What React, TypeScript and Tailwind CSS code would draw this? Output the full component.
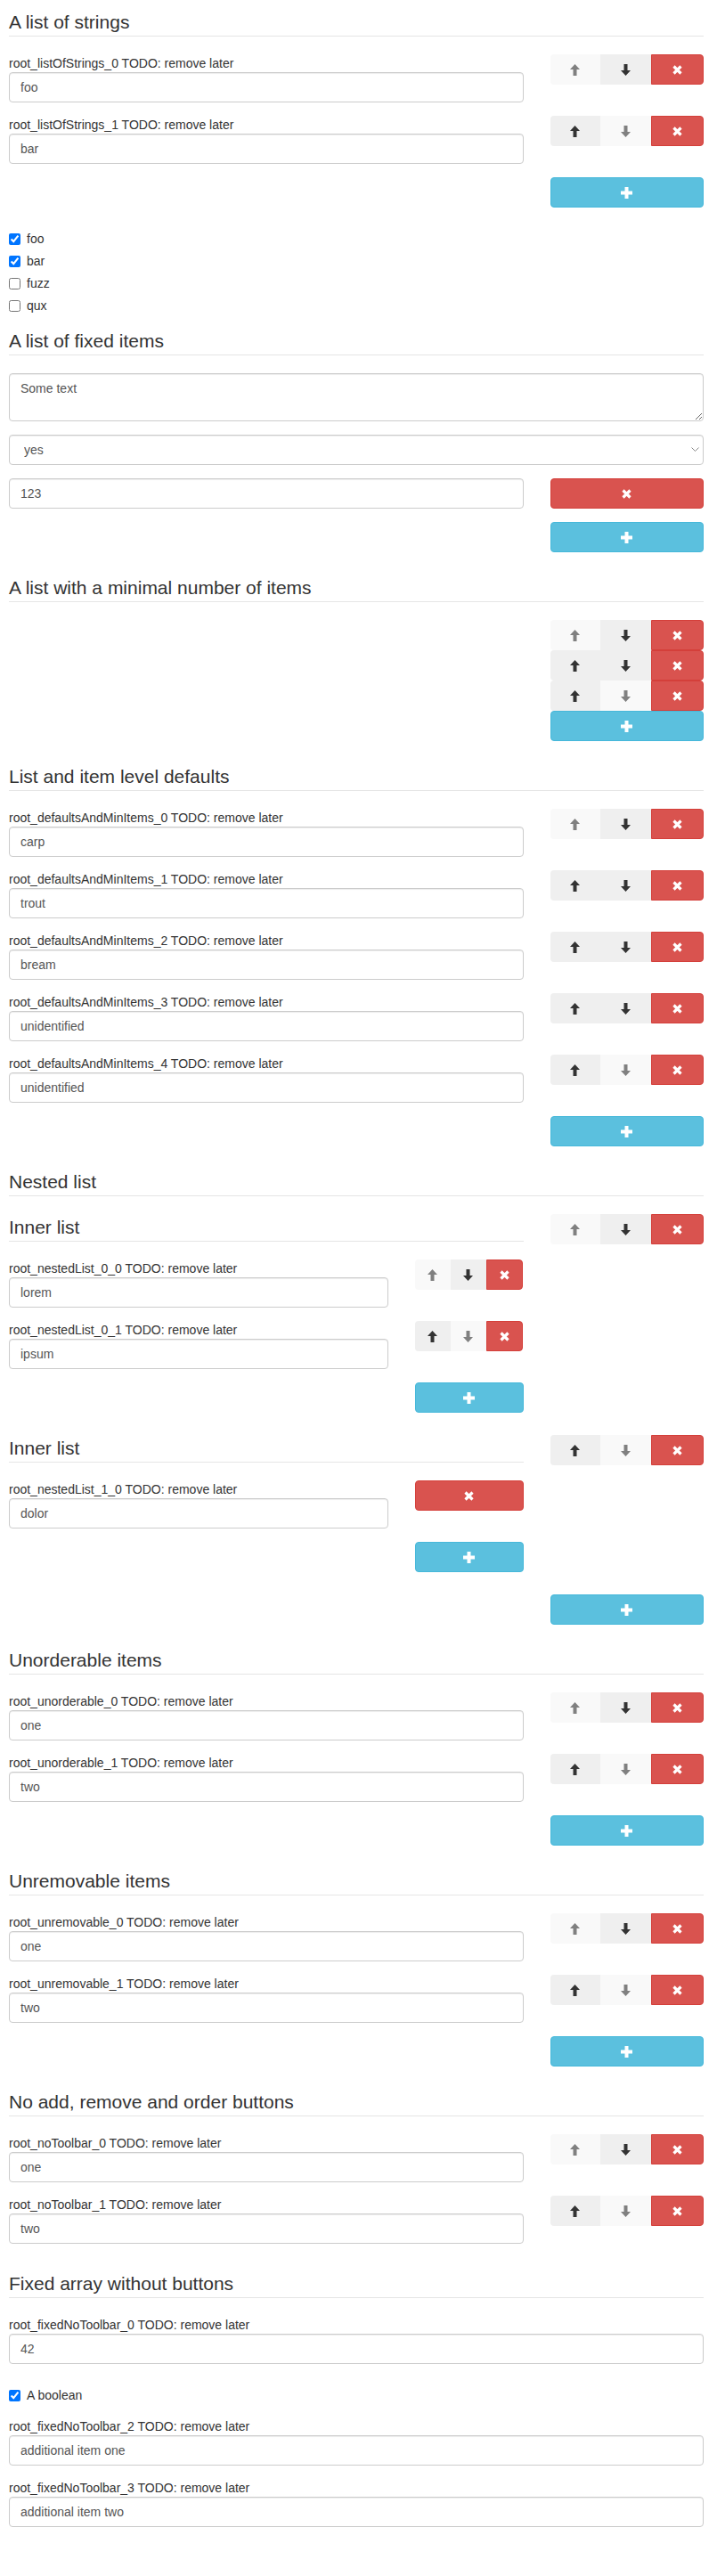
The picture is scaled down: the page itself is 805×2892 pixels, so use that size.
import React from "react";

const ArrowUp = ({ color }: { color: string }) => (
  <svg width="11" height="13" viewBox="0 0 11 13" fill={color}>
    <path d="M5.5 0 L11 6 H7.5 V13 H3.5 V6 H0 Z" />
  </svg>
);
const ArrowDown = ({ color }: { color: string }) => (
  <svg width="11" height="13" viewBox="0 0 11 13" fill={color}>
    <path d="M5.5 13 L11 7 H7.5 V0 H3.5 V7 H0 Z" />
  </svg>
);
const XIcon = () => (
  <svg width="11" height="11" viewBox="0 0 11 11" stroke="#fff" strokeWidth="3.2" fill="none">
    <path d="M1.5 1.5 L9.5 9.5 M9.5 1.5 L1.5 9.5" />
  </svg>
);
const PlusIcon = () => (
  <svg width="13" height="13" viewBox="0 0 13 13" fill="#fff">
    <rect x="4.5" y="0" width="4" height="13" />
    <rect x="0" y="4.5" width="13" height="4" />
  </svg>
);

function Legend({ children }: { children: React.ReactNode }) {
  return (
    <div className="h-[31px] border-b border-[#e5e5e5] text-[21px] leading-[30px] text-[#333] mb-5 whitespace-nowrap">
      {children}
    </div>
  );
}

function TextInput({ value }: { value: string }) {
  return (
    <input
      readOnly
      defaultValue={value}
      className="block w-full h-[34px] px-3 rounded border border-[#ccc] bg-white text-sm text-[#555] shadow-[inset_0_1px_1px_rgba(0,0,0,0.075)] outline-none"
    />
  );
}

function Field({ label, value }: { label: string; value: string }) {
  return (
    <div className="mb-[15px]">
      <label className="block h-5 text-sm leading-5 text-[#333] whitespace-nowrap">{label}</label>
      <TextInput value={value} />
    </div>
  );
}

function Toolbox({ up = true, down = true, order = true }: { up?: boolean; down?: boolean; order?: boolean }) {
  return (
    <div className="flex h-[34px]">
      {order && (
        <>
          <button
            className={`flex-1 h-[34px] flex items-center justify-center rounded-l ${up ? "bg-[#efefef]" : "bg-[#f9f9f9]"}`}
          >
            <ArrowUp color={up ? "#333" : "#808080"} />
          </button>
          <button
            className={`flex-1 h-[34px] flex items-center justify-center ${down ? "bg-[#efefef]" : "bg-[#f9f9f9]"}`}
          >
            <ArrowDown color={down ? "#333" : "#808080"} />
          </button>
        </>
      )}
      <button
        className={`flex-1 h-[34px] flex items-center justify-center bg-[#d9534f] border border-[#d43f3a] rounded-r ${order ? "" : "rounded-l"}`}
      >
        <XIcon />
      </button>
    </div>
  );
}

function AddButton({ narrow = false, className = "" }: { narrow?: boolean; className?: string }) {
  return (
    <div className={`flex justify-end ${className}`}>
      <button
        className={`${narrow ? "w-[121.875px]" : "w-[172.5px]"} h-[34px] flex items-center justify-center rounded bg-[#5bc0de] border border-[#46b8da]`}
      >
        <PlusIcon />
      </button>
    </div>
  );
}

function Row({
  label,
  value,
  up,
  down,
  order = true,
  narrow = false,
}: {
  label: string;
  value: string;
  up?: boolean;
  down?: boolean;
  order?: boolean;
  narrow?: boolean;
}) {
  return (
    <div
      className={`grid ${narrow ? "grid-cols-[minmax(0,1fr)_121.875px]" : "grid-cols-[minmax(0,1fr)_172.5px]"} gap-x-[30px] items-start`}
    >
      <Field label={label} value={value} />
      <Toolbox up={up} down={down} order={order} />
    </div>
  );
}

function Check({ label, checked }: { label: string; checked?: boolean }) {
  return (
    <label className="relative block h-5 pl-5 text-sm leading-5 text-[#333]">
      <input
        type="checkbox"
        defaultChecked={checked}
        className="absolute left-0 top-1 m-0 w-[13px] h-[13px] accent-[#0075ff]"
      />
      {label}
    </label>
  );
}

export default function App() {
  return (
    <div className="w-[805px] min-h-[2892px] bg-white pl-[10px] pr-[15px] pt-[10px] font-['Liberation_Sans',Arial,sans-serif] text-sm text-[#333]">
      {/* Section 1 */}
      <Legend>A list of strings</Legend>
      <Row label="root_listOfStrings_0 TODO: remove later" value="foo" up={false} down />
      <Row label="root_listOfStrings_1 TODO: remove later" value="bar" up down={false} />
      <AddButton className="mb-[25px]" />
      <div className="flex flex-col gap-[5px] mb-[15px]">
        <Check label="foo" checked />
        <Check label="bar" checked />
        <Check label="fuzz" />
        <Check label="qux" />
      </div>

      {/* Section 2 */}
      <Legend>A list of fixed items</Legend>
      <textarea
        readOnly
        defaultValue="Some text"
        className="block w-full h-[54px] px-3 py-1.5 mb-[15px] rounded border border-[#ccc] text-sm leading-5 text-[#555] shadow-[inset_0_1px_1px_rgba(0,0,0,0.075)] outline-none resize-y"
      />
      <div className="relative mb-[15px]">
        <select className="appearance-none block w-full h-[34px] pl-4 pr-8 rounded border border-[#ccc] bg-white text-sm text-[#555] shadow-[inset_0_1px_1px_rgba(0,0,0,0.075)] outline-none">
          <option>yes</option>
          <option>no</option>
        </select>
        <svg
          className="absolute right-[5px] top-[14px] pointer-events-none"
          width="9"
          height="6"
          viewBox="0 0 9 6"
          fill="none"
          stroke="#888"
          strokeWidth="1"
        >
          <path d="M0.5 0.5 L4.5 4.5 L8.5 0.5" />
        </svg>
      </div>
      <div className="grid grid-cols-[minmax(0,1fr)_172.5px] gap-x-[30px] items-start mb-[15px]">
        <TextInput value="123" />
        <Toolbox order={false} />
      </div>
      <AddButton className="mb-[25px]" />

      {/* Section 3 */}
      <Legend>A list with a minimal number of items</Legend>
      <div className="grid grid-cols-[minmax(0,1fr)_172.5px] gap-x-[30px]">
        <div />
        <div className="flex flex-col">
          <Toolbox up={false} down />
          <Toolbox up down />
          <Toolbox up down={false} />
        </div>
      </div>
      <AddButton className="mb-[25px]" />

      {/* Section 4 */}
      <Legend>List and item level defaults</Legend>
      <Row label="root_defaultsAndMinItems_0 TODO: remove later" value="carp" up={false} down />
      <Row label="root_defaultsAndMinItems_1 TODO: remove later" value="trout" up down />
      <Row label="root_defaultsAndMinItems_2 TODO: remove later" value="bream" up down />
      <Row label="root_defaultsAndMinItems_3 TODO: remove later" value="unidentified" up down />
      <Row label="root_defaultsAndMinItems_4 TODO: remove later" value="unidentified" up down={false} />
      <AddButton className="mb-[25px]" />

      {/* Section 5 */}
      <Legend>Nested list</Legend>
      <div className="grid grid-cols-[minmax(0,1fr)_172.5px] gap-x-[30px] items-start">
        <div>
          <Legend>Inner list</Legend>
          <Row narrow label="root_nestedList_0_0 TODO: remove later" value="lorem" up={false} down />
          <Row narrow label="root_nestedList_0_1 TODO: remove later" value="ipsum" up down={false} />
          <AddButton narrow className="mb-[25px]" />
        </div>
        <Toolbox up={false} down />
      </div>
      <div className="grid grid-cols-[minmax(0,1fr)_172.5px] gap-x-[30px] items-start">
        <div>
          <Legend>Inner list</Legend>
          <Row narrow label="root_nestedList_1_0 TODO: remove later" value="dolor" order={false} />
          <AddButton narrow className="mb-[25px]" />
        </div>
        <Toolbox up down={false} />
      </div>
      <AddButton className="mb-[25px]" />

      {/* Section 6 */}
      <Legend>Unorderable items</Legend>
      <Row label="root_unorderable_0 TODO: remove later" value="one" up={false} down />
      <Row label="root_unorderable_1 TODO: remove later" value="two" up down={false} />
      <AddButton className="mb-[25px]" />

      {/* Section 7 */}
      <Legend>Unremovable items</Legend>
      <Row label="root_unremovable_0 TODO: remove later" value="one" up={false} down />
      <Row label="root_unremovable_1 TODO: remove later" value="two" up down={false} />
      <AddButton className="mb-[25px]" />

      {/* Section 8 */}
      <Legend>No add, remove and order buttons</Legend>
      <Row label="root_noToolbar_0 TODO: remove later" value="one" up={false} down />
      <Row label="root_noToolbar_1 TODO: remove later" value="two" up down={false} />
      <div className="h-[15px]" />

      {/* Section 9 */}
      <Legend>Fixed array without buttons</Legend>
      <Field label="root_fixedNoToolbar_0 TODO: remove later" value="42" />
      <div className="pt-[10px] mb-[15px]">
        <Check label="A boolean" checked />
      </div>
      <Field label="root_fixedNoToolbar_2 TODO: remove later" value="additional item one" />
      <Field label="root_fixedNoToolbar_3 TODO: remove later" value="additional item two" />
    </div>
  );
}
